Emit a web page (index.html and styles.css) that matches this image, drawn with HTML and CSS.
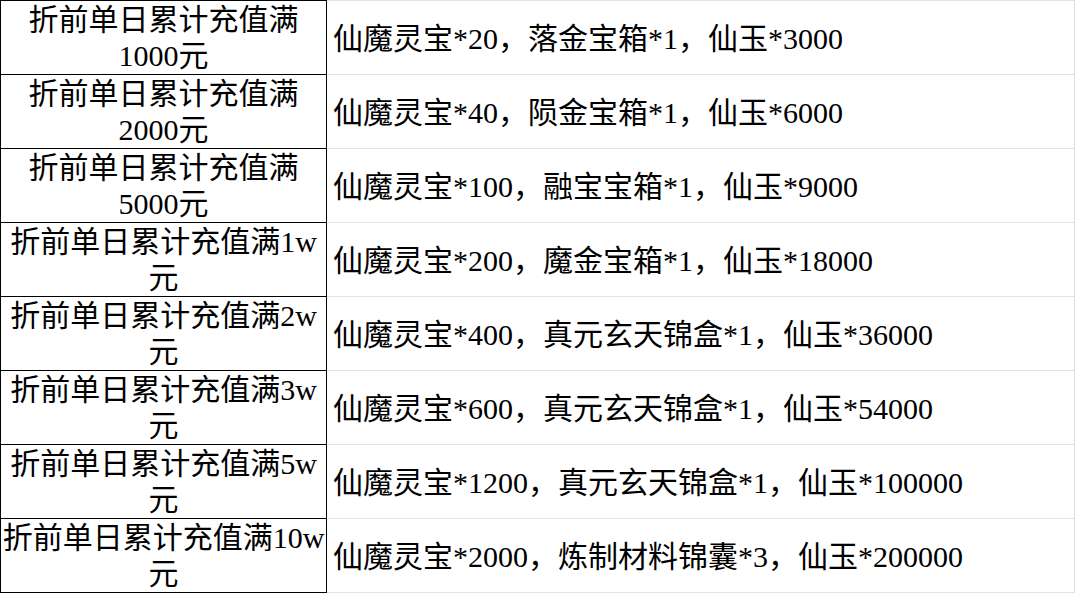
FILE: index.html
```html
<!DOCTYPE html>
<html lang="zh-CN">
<head>
<meta charset="utf-8">
<title>充值奖励</title>
<link rel="stylesheet" href="styles.css">
</head>
<body>
<table class="rewards">
  <colgroup><col class="c1"><col class="c2"></colgroup>
  <tbody>
    <tr><td class="cond">折前单日累计充值满1000元</td><td class="gift">仙魔灵宝*20，落金宝箱*1，仙玉*3000</td></tr>
    <tr><td class="cond">折前单日累计充值满2000元</td><td class="gift">仙魔灵宝*40，陨金宝箱*1，仙玉*6000</td></tr>
    <tr><td class="cond">折前单日累计充值满5000元</td><td class="gift">仙魔灵宝*100，融宝宝箱*1，仙玉*9000</td></tr>
    <tr><td class="cond">折前单日累计充值满1w元</td><td class="gift">仙魔灵宝*200，魔金宝箱*1，仙玉*18000</td></tr>
    <tr><td class="cond">折前单日累计充值满2w元</td><td class="gift">仙魔灵宝*400，真元玄天锦盒*1，仙玉*36000</td></tr>
    <tr><td class="cond">折前单日累计充值满3w元</td><td class="gift">仙魔灵宝*600，真元玄天锦盒*1，仙玉*54000</td></tr>
    <tr><td class="cond">折前单日累计充值满5w元</td><td class="gift">仙魔灵宝*1200，真元玄天锦盒*1，仙玉*100000</td></tr>
    <tr><td class="cond">折前单日累计充值满10w元</td><td class="gift">仙魔灵宝*2000，炼制材料锦囊*3，仙玉*200000</td></tr>
  </tbody>
</table>
</body>
</html>
```

FILE: styles.css
```css
html, body {
  margin: 0;
  padding: 0;
  background: #fff;
}
.rewards {
  border-collapse: collapse;
  table-layout: fixed;
  width: 1075px;
  font-family: "Liberation Serif", "Noto Sans CJK SC", serif;
  font-size: 30px;
  color: #000;
}
.rewards .c1 { width: 326px; }
.rewards td {
  height: 74px;
  padding: 0;
  vertical-align: middle;
  box-sizing: border-box;
}
.cond {
  border: 1px solid #000;
  text-align: center;
  line-height: 36px;
  padding: 0 1px !important;
}
.gift {
  border: 1px solid #e2e2e2;
  text-align: left;
  line-height: 36px;
  padding: 3px 0 0 6px !important;
  white-space: nowrap;
}
```
